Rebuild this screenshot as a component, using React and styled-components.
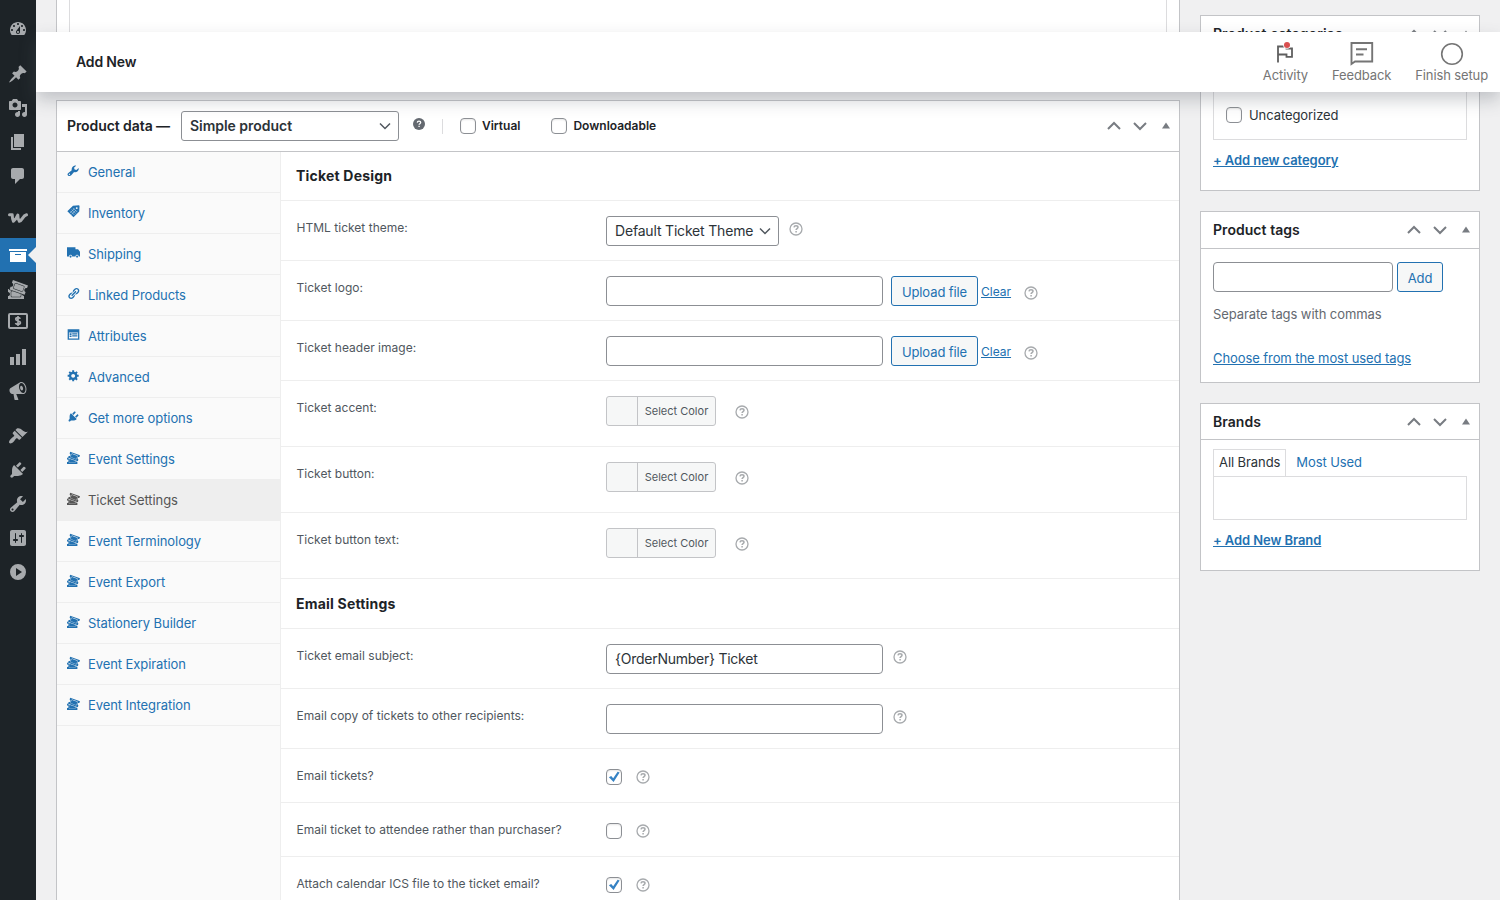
import React from "react";
import styled, { createGlobalStyle, css } from "styled-components";

const GlobalStyle = createGlobalStyle`
  * {
    box-sizing: border-box;
  }
  body {
    margin: 0;
    overflow: hidden;
    background: #f0f0f1;
    color: #3c434a;
    font-family: Inter, "Liberation Sans", sans-serif;
    font-size: 13px;
    letter-spacing: -0.08px;
    line-height: 18px;
  }
  input, button {
    font-family: inherit;
  }
`;

const paths = {
  dashboard:
    "M3.76 16h12.48c1.1-1.37 1.76-3.11 1.76-5 0-4.42-3.58-8-8-8s-8 3.58-8 8c0 1.89.66 3.63 1.76 5zM10 4c.55 0 1 .45 1 1s-.45 1-1 1-1-.45-1-1 .45-1 1-1zM6 6c.55 0 1 .45 1 1s-.45 1-1 1-1-.45-1-1 .45-1 1-1zm8 0c.55 0 1 .45 1 1s-.45 1-1 1-1-.45-1-1 .45-1 1-1zm-5.37 5.55L12 7v6c0 1.1-.9 2-2 2s-2-.9-2-2c0-.57.24-1.08.63-1.45zM4 10c.55 0 1 .45 1 1s-.45 1-1 1-1-.45-1-1 .45-1 1-1zm12 0c.55 0 1 .45 1 1s-.45 1-1 1-1-.45-1-1 .45-1 1-1zm-5 3c0-.55-.45-1-1-1s-1 .45-1 1 .45 1 1 1 1-.45 1-1z",
  pin:
    "M10.44 3.02l1.82-1.82 6.36 6.35-1.83 1.82c-1.05-.68-2.48-.57-3.41.36l-.75.75c-.92.93-1.04 2.35-.35 3.41l-1.83 1.82-2.41-2.41-2.8 2.79c-.42.42-3.38 2.71-3.8 2.29s1.86-3.39 2.28-3.81l2.79-2.79L4.1 9.36l1.83-1.82c1.05.69 2.48.57 3.4-.36l.75-.75c.93-.92 1.05-2.35.36-3.41z",
  media:
    "M13 11V4c0-.55-.45-1-1-1h-1.67L9 1H5L3.67 3H2c-.55 0-1 .45-1 1v7c0 .55.45 1 1 1h10c.55 0 1-.45 1-1zM7 4.5c1.38 0 2.5 1.12 2.5 2.5S8.38 9.5 7 9.5 4.5 8.38 4.5 7 5.62 4.5 7 4.5zM14 6h5v10.5c0 1.38-1.12 2.5-2.5 2.5S14 17.88 14 16.5s1.12-2.5 2.5-2.5c.17 0 .34.02.5.05V9h-3V6zm-4 8.05V13h2v3.5c0 1.38-1.12 2.5-2.5 2.5S7 17.88 7 16.5 8.12 14 9.5 14c.17 0 .34.02.5.05z",
  page: "M6 15V2h10v13H6zm-1 1h8v2H3V5h2v11z",
  comment:
    "M5 2h9c1.1 0 2 .9 2 2v7c0 1.1-.9 2-2 2h-2l-5 5v-5H5c-1.1 0-2-.9-2-2V4c0-1.1.9-2 2-2z",
  archive: "M19 4v2H1V4h18zM2 7h16v10H2V7zm11 3V9H7v1h6z",
  tickets:
    "M20 6.38L18.99 9.2v-.01c-.52-.19-1.03-.16-1.53.08s-.85.62-1.04 1.14-.16 1.03.07 1.53c.24.5.62.84 1.15 1.03v.01l-1.01 2.82-15.06-5.38.99-2.79c.52.19 1.03.16 1.53-.08.5-.23.84-.61 1.03-1.13s.16-1.03-.08-1.53c-.23-.49-.61-.83-1.13-1.02L4.93 1zm-4.97 5.69l1.37-3.76c.12-.31.1-.65-.04-.95s-.39-.53-.7-.65L8.14 3.98c-.64-.23-1.37.12-1.6.74L5.17 8.48c-.24.65.1 1.37.74 1.6l7.52 2.74c.14.05.28.08.43.08.52 0 1-.33 1.17-.83zM7.97 4.45l7.51 2.73c.19.07.34.21.43.39.08.18.09.38.02.57l-1.37 3.76c-.13.38-.58.59-.96.45L6.09 9.61c-.39-.14-.59-.57-.45-.96l1.37-3.76c.1-.29.39-.49.7-.49.09 0 .17.02.26.05zm6.82 12.14c.35.27.75.41 1.2.41H16v3H0v-2.96c.55 0 1.03-.2 1.41-.59.39-.38.59-.86.59-1.41s-.2-1.02-.59-1.41-.86-.59-1.41-.59V10h1.05l-.28.8 2.87 1.02c-.51.16-.89.62-.89 1.18v4c0 .69.56 1.25 1.25 1.25h8c.69 0 1.25-.56 1.25-1.25v-1.75l.83.3c.12.43.36.78.71 1.04zM3.25 17v-4c0-.41.34-.75.75-.75h.83l7.92 2.83V17c0 .41-.34.75-.75.75H4c-.41 0-.75-.34-.75-.75z",
  chart: "M18 18V2h-4v16h4zm-6 0V7H8v11h4zm-6 0v-8H2v8h4z",
  megaphone:
    "M18.15 5.94c.46 1.62.38 3.22-.02 4.48-.42 1.28-1.26 2.18-2.3 2.48-.16.06-.26.06-.4.06-.06.02-.12.02-.18.02-.06.02-.14.02-.22.02h-6.8l2.22 5.5c.02.14-.06.26-.14.34-.08.1-.24.16-.34.16H6.95c-.1 0-.26-.06-.34-.16-.08-.08-.16-.2-.14-.34l-1-5.5H4.25l-.02-.02c-.5.06-1.08-.18-1.54-.62s-.88-1.08-1.06-1.88c-.24-.8-.2-1.56-.02-2.2.18-.62.58-1.08 1.06-1.3l.02-.02 9-5.4c.1-.06.18-.1.24-.16.06-.04.14-.08.24-.12.16-.08.28-.12.5-.18 1.04-.3 2.24.1 3.22.98s1.84 2.24 2.26 3.86zm-2.58 5.98h-.02c.4-.1.74-.34 1.04-.7.58-.7.86-1.76.86-3.04 0-.64-.1-1.3-.28-1.98-.34-1.36-1.02-2.5-1.78-3.24s-1.68-1.1-2.46-.88c-.82.22-1.4.96-1.7 2-.32 1.04-.28 2.36.06 3.72.38 1.36 1 2.5 1.8 3.24.78.74 1.62 1.1 2.48.88zm-2.54-7.08c.22-.04.42-.02.62.04.38.16.76.48 1.02 1s.42 1.2.42 1.78c0 .3-.04.56-.12.8-.18.48-.44.84-.86.94-.34.1-.8-.06-1.14-.4s-.64-.86-.78-1.5c-.18-.62-.12-1.24.02-1.72s.48-.84.82-.94z",
  brush:
    "M14.48 11.06L7.41 3.99l1.5-1.5c.5-.56 2.3-.47 3.51.32 1.21.8 1.43 1.28 2.91 2.1 1.18.64 2.45 1.26 4.45.85zm-.71.71L6.7 4.7 4.93 6.47c-.39.39-.39 1.02 0 1.41l1.06 1.06c.39.39.39 1.03 0 1.42-.6.6-1.43 1.11-2.21 1.69-.35.26-.7.53-1.01.84C1.43 14.23.4 16.08 1.4 17.07c.99 1 2.84-.03 4.18-1.36.31-.31.58-.66.85-1.02.57-.78 1.08-1.61 1.69-2.21.39-.39 1.02-.39 1.41 0l1.06 1.06c.39.39 1.02.39 1.41 0z",
  plug:
    "M13.11 4.36L9.87 7.6 8 5.73l3.24-3.24c.35-.34 1.05-.2 1.56.32.52.51.66 1.21.31 1.55zm-8 1.77l.91-1.12 9.01 9.01-1.19.84c-.71.71-2.63 1.16-3.82 1.16H6.14L4.9 17.26c-.59.59-1.54.59-2.12 0-.59-.58-.59-1.53 0-2.12l1.24-1.24v-3.88c0-1.13.4-3.19 1.09-3.89zm7.26 3.97l3.24-3.24c.34-.35 1.04-.21 1.55.31.52.51.66 1.21.31 1.55l-3.24 3.25z",
  tools:
    "M16.68 9.77c-1.34 1.34-3.3 1.67-4.95.99l-5.41 6.52c-.99.99-2.59.99-3.58 0s-.99-2.59 0-3.57l6.52-5.42c-.68-1.65-.35-3.61.99-4.95 1.28-1.28 3.12-1.62 4.72-1.06l-2.89 2.89 2.82 2.82 2.86-2.87c.53 1.58.18 3.39-1.08 4.65zM3.81 16.21c.4.39 1.04.39 1.43 0 .4-.4.4-1.04 0-1.43-.39-.4-1.03-.4-1.43 0-.39.39-.39 1.03 0 1.43z",
  settings:
    "M18 16V4c0-1.1-.9-2-2-2H4c-1.1 0-2 .9-2 2v12c0 1.1.9 2 2 2h12c1.1 0 2-.9 2-2zM8 11h1c.55 0 1 .45 1 1s-.45 1-1 1H8v1.5c0 .28-.22.5-.5.5s-.5-.22-.5-.5V13H6c-.55 0-1-.45-1-1s.45-1 1-1h1V5.5c0-.28.22-.5.5-.5s.5.22.5.5V11zm5-2h-1c-.55 0-1-.45-1-1s.45-1 1-1h1V5.5c0-.28.22-.5.5-.5s.5.22.5.5V7h1c.55 0 1 .45 1 1s-.45 1-1 1h-1v5.5c0 .28-.22.5-.5.5s-.5-.22-.5-.5V9z",
  collapse:
    "M10 2a8 8 0 1 0 0 16 8 8 0 0 0 0-16zM8 6l6 4-6 4z",
  wrench:
    "M1.5 17.6c-1.3-1.3-.7-2.9.6-3.9l5.2-3.9C6.8 7.500 7.600 5.200 9.200 3.900c1.400-1.200 3.100-1.700 4.800-1.400l-3.200 3.400.9 2.700 2.800.7 3.400-3.300c.5 1.800-.2 3.700-1.500 5-1.500 1.500-3.600 2-5.500 1.300l-4.400 5.100c-1.400 1.500-3.600 1.600-5 .2zM3 16.700l1.300.2.6-1.200-.9-1-1.300.5z",
  truck:
    "M0 2h13v3h4l3 4v7h-2a2.500 2.500 0 0 0-5 0H8a2.500 2.500 0 0 0-5 0H0zM5.500 14.700a1.600 1.600 0 1 1 0 3.200 1.600 1.600 0 0 1 0-3.200zM15.500 14.700a1.600 1.600 0 1 1 0 3.200 1.600 1.600 0 0 1 0-3.200z",
  link:
    "M17.74 2.76c1.68 1.69 1.68 4.41 0 6.1l-1.53 1.52c-1.12 1.12-2.7 1.47-4.14 1.09l2.62-2.61.76-.77.76-.76c.84-.84.84-2.2 0-3.04-.84-.85-2.2-.85-3.04 0l-.77.76-3.38 3.38c-.37-1.44-.02-3.02 1.1-4.14l1.52-1.53c1.69-1.68 4.42-1.68 6.1 0zM8.59 13.43l5.34-5.34c.42-.42.42-1.1 0-1.52-.44-.43-1.13-.39-1.53 0l-5.33 5.34c-.42.42-.42 1.1 0 1.52.44.43 1.13.39 1.52 0zm-.76 2.29l4.14-4.15c.38 1.44.03 3.02-1.09 4.14l-1.52 1.53c-1.69 1.68-4.41 1.68-6.1 0-1.68-1.68-1.68-4.42 0-6.1l1.53-1.52c1.12-1.12 2.7-1.47 4.14-1.1l-4.14 4.15c-.85.84-.85 2.2 0 3.05.84.84 2.2.84 3.04 0z",
  feedback: "M1 2h18v16H1zM3 7v9h14V7zM4 8h3v3H4zM8 8h8v2H8zM8 11h8v2H8zM4 12h3v2H4z",
  gear:
    "M18 12h-2.18c-.17.7-.44 1.35-.81 1.93l1.54 1.54-2.1 2.1-1.54-1.54c-.58.36-1.23.63-1.91.79V19H8v-2.18c-.68-.16-1.33-.43-1.91-.79l-1.54 1.54-2.12-2.12 1.54-1.54c-.36-.58-.63-1.23-.79-1.91H1V9.03h2.17c.16-.7.44-1.35.8-1.94L2.43 5.55l2.1-2.1 1.54 1.54c.58-.37 1.24-.64 1.93-.81V2h3v2.18c.68.16 1.33.43 1.91.79l1.54-1.54 2.12 2.12-1.54 1.54c.36.59.64 1.24.8 1.94H18V12zm-8.5 1.5c1.66 0 3-1.34 3-3s-1.34-3-3-3-3 1.34-3 3 1.34 3 3 3z",
};

const Svg = styled.svg`
  display: block;
  flex: none;
  fill: currentColor;
  fill-rule: evenodd;
`;

const Icon = ({ name, size = 20 }) => {
  if (name === "woo") {
    return (
      <Svg width={size} height={size} viewBox="0 0 20 20">
        <path
          d="M1.500 3.700h2.700c.1 2.500.3 5 1.200 6.600C7.400 9 8.700 6.500 9.800 4c0 2.500.3 4.800 1.500 6.300 3.200-.6 3.200-5.600 7.200-6.500"
          fill="none"
          stroke="currentColor"
          strokeWidth="3"
          strokeLinecap="round"
          strokeLinejoin="round"
        />
      </Svg>
    );
  }
  if (name === "payments") {
    return (
      <Svg width={size} height={size} viewBox="0 0 20 20">
        <rect x="1" y="1" width="18" height="14" rx="1" fill="none" stroke="currentColor" strokeWidth="2" />
        <path
          d="M12.300 5.800C12 5 11.200 4.700 10 4.700c-1.300 0-2.200.5-2.200 1.500 0 2.400 4.600 1.100 4.600 3.500 0 1.100-1 1.600-2.400 1.600-1.300 0-2.200-.5-2.500-1.400M10 3v10"
          fill="none"
          stroke="currentColor"
          strokeWidth="1.700"
        />
      </Svg>
    );
  }
  if (name === "tag") {
    return (
      <Svg width={size} height={size} viewBox="0 0 20 20">
        <path d="M.500 9.700L9.200 1l9.300-.500.800 1.200L18.800 10 10 18.800zM15 3.300a1.500 1.500 0 1 0 0 3 1.500 1.500 0 0 0 0-3z" />
        <path
          d="M5 9l6.500 6.500M7.200 6.800l6.500 6.500M9.400 4.600l6.500 6.500M4.800 12.200l6.600-6.600M7.200 14.500l6.600-6.600"
          stroke="#fff"
          strokeWidth=".9"
          opacity=".7"
        />
      </Svg>
    );
  }
  return (
    <Svg width={size} height={size} viewBox="0 0 20 20">
      <path d={paths[name]} />
    </Svg>
  );
};

const HelpIcon = ({ solid }) => (
  <Svg width={solid ? 12 : 14} height={solid ? 12 : 14} viewBox="0 0 14 14">
    <circle
      cx="7"
      cy="7"
      r={solid ? 7 : 6}
      fill={solid ? "currentColor" : "none"}
      stroke={solid ? "none" : "currentColor"}
      strokeWidth="1.300"
    />
    <path
      d="M5 5.400c.1-1.100.9-1.700 2-1.700s2 .6 2 1.600c0 1.300-1.900 1.400-1.900 2.700M7.100 9v1.500"
      fill="none"
      stroke={solid ? "#fff" : "currentColor"}
      strokeWidth="1.500"
    />
  </Svg>
);

const Layout = styled.div`
  display: flex;
  height: 900px;
  overflow: hidden;
`;

const AdminMenu = styled.nav`
  flex: none;
  width: 36px;
  padding-top: 12px;
  background: #1d2327;
  color: #a7aaad;
`;

const MenuItem = styled.a`
  display: flex;
  position: relative;
  align-items: center;
  justify-content: center;
  height: 34px;
  margin-top: ${(props) => (props.$gap ? "11px" : 0)};
  padding-right: 1px;
  ${(props) =>
    props.$active &&
    css`
      background: #2271b1;
      color: #fff;
      &::after {
        content: "";
        position: absolute;
        right: 0;
        top: 9px;
        border: 8px solid transparent;
        border-right-color: #f0f0f1;
        border-left: 0;
      }
    `}
`;

const Content = styled.div`
  position: relative;
  flex: 1;
  display: flex;
  align-items: flex-start;
  gap: 20px;
  padding: 0 20px;
`;

const TopBar = styled.header`
  position: absolute;
  left: 0;
  right: 0;
  top: 32px;
  z-index: 2;
  display: flex;
  align-items: center;
  justify-content: space-between;
  height: 60px;
  padding: 0 12px 0 40px;
  background: #fff;
  box-shadow: 0 8px 16px 0 rgba(85, 93, 102, 0.3);
`;

const PageTitle = styled.h1`
  margin: 0;
  color: #1d2327;
  font-size: 14px;
  font-weight: 600;
  letter-spacing: -0.15px;
  line-height: 20px;
`;

const Activity = styled.div`
  display: flex;
  gap: 24px;
`;

const ActivityTab = styled.div`
  display: flex;
  flex-direction: column;
  align-items: center;
  padding-top: 2px;
  color: #757575;
  letter-spacing: -0.12px;
  white-space: nowrap;
`;

const MainColumn = styled.main`
  width: 1124px;
`;

const EditorBox = styled.div`
  height: 80px;
  margin-bottom: 20px;
  padding: 0 12px;
  border: 1px solid #c3c4c7;
  border-top: 0;
  background: #fff;
`;

const EditorFrame = styled.div`
  height: 60px;
  border: 1px solid #dcdcde;
  border-top: 0;
`;

const Box = styled.section`
  border: 1px solid #c3c4c7;
  background: #fff;
`;

const BoxHeader = styled.div`
  display: flex;
  align-items: center;
  justify-content: space-between;
  height: ${(props) => props.$height || 36}px;
  padding: 0 6px 0 ${(props) => props.$left || 12}px;
  border-bottom: 1px solid #c3c4c7;
`;

const BoxTitle = styled.h2`
  margin: 0;
  color: #1d2327;
  font-size: 14px;
  font-weight: 600;
  letter-spacing: ${(props) => props.$spacing || 0}px;
  line-height: 20px;
`;

const HandleGroup = styled.div`
  display: flex;
  align-items: center;
  gap: 12px;
  color: #787c82;
`;

const Handles = () => (
  <HandleGroup>
    <Svg width="14" height="10" viewBox="0 0 14 10">
      <path d="M1 8l6-6 6 6" fill="none" stroke="currentColor" strokeWidth="2" />
    </Svg>
    <Svg width="14" height="10" viewBox="0 0 14 10">
      <path d="M1 2l6 6 6-6" fill="none" stroke="currentColor" strokeWidth="2" />
    </Svg>
    <Svg width="14" height="10" viewBox="0 0 14 10">
      <path d="M3 7.500L7 1.500l4 6z" />
    </Svg>
  </HandleGroup>
);

const DataTitle = styled.div`
  display: flex;
  align-items: center;
  padding-left: 11px;
  flex: 1;
`;

const SelectBox = styled.div`
  display: flex;
  align-items: center;
  justify-content: space-between;
  width: ${(props) => props.$width}px;
  height: 30px;
  padding: 0 7px 0 8px;
  border: 1px solid #8c8f94;
  border-radius: 3px;
  background: #fff;
  color: #2c3338;
  font-size: 14px;
  font-weight: ${(props) => (props.$bold ? 600 : 400)};
  letter-spacing: ${(props) => (props.$bold ? -0.03 : -0.18)}px;
  white-space: nowrap;
`;

const Select = ({ children, ...rest }) => (
  <SelectBox {...rest}>
    {children}
    <Svg width="12" height="8" viewBox="0 0 12 8">
      <path d="M1 1.500l5 5 5-5" fill="none" stroke="#50575e" strokeWidth="1.500" />
    </Svg>
  </SelectBox>
);

const Divider = styled.span`
  width: 1px;
  height: 15px;
  margin: 0 17px 0 17px;
  background: #dcdcde;
`;

const Check = styled.span`
  display: flex;
  align-items: center;
  justify-content: center;
  flex: none;
  width: 16px;
  height: 16px;
  border: 1px solid #8c8f94;
  border-radius: 4px;
  background: #fff;
  box-shadow: inset 0 1px 2px rgba(0, 0, 0, 0.1);
`;

const Checkbox = ({ checked }) => (
  <Check>
    {checked && (
      <Svg width="12" height="12" viewBox="0 0 12 12">
        <path d="M.900 6.300l2.300-1.400 2 2.400L9.600.800l2 .8-6 9.400z" fill="#3582c4" />
      </Svg>
    )}
  </Check>
);

const TypeOption = styled.label`
  display: flex;
  align-items: center;
  gap: 6px;
  margin-right: 31px;
  color: #1d2327;
  font-size: 12px;
  font-weight: 600;
  letter-spacing: 0;
`;

const HeaderHelp = styled.span`
  margin: -4px 0 0 14px;
  color: #646970;
`;

const DataBody = styled.div`
  display: flex;
  height: 780px;
`;

const Tabs = styled.ul`
  flex: none;
  width: 224px;
  margin: 0;
  padding: 0;
  border-right: 1px solid #eee;
  background: #fafafa;
  list-style: none;
`;

const Tab = styled.li`
  display: flex;
  align-items: center;
  gap: 8px;
  height: 41px;
  padding-left: 10px;
  border-bottom: 1px solid #eee;
  background: ${(props) => (props.$active ? "#eee" : "none")};
  color: ${(props) => (props.$active ? "#555" : "#2271b1")};
  svg {
    margin-top: -4px;
  }
`;

const Options = styled.div`
  flex: 1;
`;

const SectionTitle = styled.h3`
  display: flex;
  align-items: center;
  height: ${(props) => props.$height}px;
  margin: 0;
  padding-left: 15px;
  border-bottom: 1px solid #eee;
  color: #1d2327;
  font-size: 14px;
  font-weight: 700;
  letter-spacing: 0.2px;
`;

const Field = styled.div`
  display: flex;
  height: ${(props) => props.$height}px;
  padding: 15px 0 0 15px;
  border-bottom: 1px solid #eee;
`;

const Label = styled.label`
  flex: none;
  width: 310px;
  padding: 2px 0 0 0.5px;
  color: #50575e;
  font-size: 12px;
  letter-spacing: 0.02px;
  line-height: 20px;
`;

const Control = styled.div`
  display: flex;
  align-items: center;
  height: ${(props) => (props.$short ? 26 : 30)}px;
`;

const TextInput = styled.input`
  width: ${(props) => props.$width || 277}px;
  height: 30px;
  padding: 0 8px 2px;
  border: 1px solid #8c8f94;
  border-radius: 4px;
  outline: 0;
  background: #fff;
  color: #2c3338;
  font-size: 14px;
  letter-spacing: -0.25px;
`;

const Button = styled.button`
  width: ${(props) => props.$width}px;
  height: 30px;
  margin-left: ${(props) => props.$gap}px;
  padding: 1px 0 0;
  border: 1px solid #2271b1;
  border-radius: 3px;
  background: #f6f7f7;
  color: #2271b1;
  font-size: 13px;
  letter-spacing: -0.1px;
  white-space: nowrap;
`;

const Link = styled.a`
  color: #2271b1;
  font-size: ${(props) => props.$size || 13}px;
  font-weight: ${(props) => (props.$bold ? 600 : 400)};
  text-decoration: underline;
  white-space: nowrap;
`;

const ClearLink = styled(Link)`
  width: 43px;
  margin-left: 3px;
  padding-top: 2px;
  letter-spacing: 0;
`;

const ColorButton = styled.div`
  display: flex;
  width: 110px;
  height: 30px;
  border: 1px solid #c3c4c7;
  border-radius: 3px;
  background: #f6f7f7;
  color: #50575e;
  font-size: 11px;
  letter-spacing: 0;
  line-height: 28px;
  span {
    flex: 1;
    margin-left: 30px;
    border-left: 1px solid #c3c4c7;
    text-align: center;
    white-space: nowrap;
  }
`;

const Tip = styled.span`
  margin: ${(props) => props.$top || 0}px 0 0 ${(props) => props.$left}px;
  color: #a7aaad;
`;

const SideColumn = styled.aside`
  display: flex;
  flex-direction: column;
  gap: 20px;
  width: 280px;
  padding-top: 15px;
`;

const SideBody = styled.div`
  display: flex;
  flex-direction: column;
  align-items: flex-start;
  height: ${(props) => props.$height}px;
  padding: ${(props) => props.$top}px 12px 0;
`;

const ListBox = styled.div`
  width: 254px;
  height: ${(props) => props.$height}px;
  border: 1px solid #dcdcde;
`;

const CategoryItem = styled.label`
  display: flex;
  align-items: center;
  gap: 7px;
  padding: 37px 0 0 12px;
  color: #2c3338;
`;

const TagForm = styled.div`
  display: flex;
`;

const Hint = styled.p`
  margin: 13px 0 26px;
  color: #646970;
`;

const BrandTabs = styled.div`
  display: flex;
  height: 28px;
  margin-bottom: -1px;
`;

const BrandTab = styled.span`
  padding: 3px 5px 0;
  border: 1px solid ${(props) => (props.$active ? "#dcdcde" : "transparent")};
  border-bottom: 0;
  background: ${(props) => (props.$active ? "#fff" : "none")};
  color: ${(props) => (props.$active ? "#2c3338" : "#2271b1")};
  margin-right: 4px;
`;

const AddLink = styled(Link)`
  margin-top: ${(props) => props.$top}px;
`;

const menu = [
  { icon: "dashboard" },
  { icon: "pin", gap: true },
  { icon: "media" },
  { icon: "page" },
  { icon: "comment" },
  { icon: "woo", gap: true },
  { icon: "archive", active: true },
  { icon: "tickets" },
  { icon: "payments" },
  { icon: "chart" },
  { icon: "megaphone" },
  { icon: "brush", gap: true },
  { icon: "plug" },
  { icon: "tools" },
  { icon: "settings" },
  { icon: "collapse" },
];

const tabs = [
  ["wrench", "General"],
  ["tag", "Inventory"],
  ["truck", "Shipping"],
  ["link", "Linked Products"],
  ["feedback", "Attributes"],
  ["gear", "Advanced"],
  ["plug", "Get more options"],
  ["tickets", "Event Settings"],
  ["tickets", "Ticket Settings"],
  ["tickets", "Event Terminology"],
  ["tickets", "Event Export"],
  ["tickets", "Stationery Builder"],
  ["tickets", "Event Expiration"],
  ["tickets", "Event Integration"],
];

const UploadField = ({ label }) => (
  <Field $height={60}>
    <Label>{label}</Label>
    <Control>
      <TextInput />
      <Button $width={87} $gap={8}>
        Upload file
      </Button>
      <ClearLink $size={12}>Clear</ClearLink>
      <Tip $left={0} $top={4}>
        <HelpIcon />
      </Tip>
    </Control>
  </Field>
);

const ColorField = ({ label }) => (
  <Field $height={66}>
    <Label>{label}</Label>
    <Control>
      <ColorButton>
        <span>Select Color</span>
      </ColorButton>
      <Tip $left={19} $top={2}>
        <HelpIcon />
      </Tip>
    </Control>
  </Field>
);

const TextField = ({ label, value }) => (
  <Field $height={60}>
    <Label>{label}</Label>
    <Control>
      <TextInput defaultValue={value} />
      <Tip $left={10} $top={-4}>
        <HelpIcon />
      </Tip>
    </Control>
  </Field>
);

const CheckField = ({ label, checked }) => (
  <Field $height={54}>
    <Label>{label}</Label>
    <Control $short>
      <Checkbox checked={checked} />
      <Tip $left={14}>
        <HelpIcon />
      </Tip>
    </Control>
  </Field>
);

const SideBox = ({ title, headerHeight, height, top, children }) => (
  <Box>
    <BoxHeader $height={headerHeight}>
      <BoxTitle $spacing={0.05}>{title}</BoxTitle>
      <Handles />
    </BoxHeader>
    <SideBody $height={height} $top={top}>
      {children}
    </SideBody>
  </Box>
);

export default function App() {
  return (
    <Layout>
      <GlobalStyle />
      <AdminMenu>
        {menu.map((item) => (
          <MenuItem key={item.icon} $gap={item.gap} $active={item.active}>
            <Icon name={item.icon} />
          </MenuItem>
        ))}
      </AdminMenu>
      <Content>
        <TopBar>
          <PageTitle>Add New</PageTitle>
          <Activity>
            <ActivityTab>
              <Svg width="24" height="24" viewBox="0 0 24 24">
                <path
                  d="M5 20.500V4.500h8.500v2H19v8.300h-5.500v-2.300H5"
                  fill="none"
                  stroke="#5f5f5f"
                  strokeWidth="1.800"
                />
                <circle cx="14" cy="3" r="3.800" fill="#fff" />
                <circle cx="14" cy="3" r="3" fill="#d94f4f" />
              </Svg>
              Activity
            </ActivityTab>
            <ActivityTab>
              <Svg width="24" height="24" viewBox="0 0 24 24">
                <path
                  d="M1.500 1h20.700v18.500H5L1.500 22zM6 7.300h11M6 12.500h7.500"
                  fill="none"
                  stroke="currentColor"
                  strokeWidth="1.900"
                />
              </Svg>
              Feedback
            </ActivityTab>
            <ActivityTab>
              <Svg width="24" height="24" viewBox="0 0 24 24">
                <circle cx="12" cy="12" r="10.300" fill="none" stroke="currentColor" strokeWidth="1.600" />
              </Svg>
              Finish setup
            </ActivityTab>
          </Activity>
        </TopBar>

        <MainColumn>
          <EditorBox>
            <EditorFrame />
          </EditorBox>
          <Box>
            <BoxHeader $height={51} $left={10}>
              <BoxTitle $spacing={-0.08}>Product data —</BoxTitle>
              <DataTitle>
                <Select $width={218} $bold>
                  Simple product
                </Select>
                <HeaderHelp>
                  <HelpIcon solid />
                </HeaderHelp>
                <Divider />
                <TypeOption>
                  <Checkbox />
                  Virtual
                </TypeOption>
                <TypeOption>
                  <Checkbox />
                  Downloadable
                </TypeOption>
              </DataTitle>
              <Handles />
            </BoxHeader>
            <DataBody>
              <Tabs>
                {tabs.map(([icon, label]) => (
                  <Tab key={label} $active={label === "Ticket Settings"}>
                    <Icon name={icon} size={13} />
                    {label}
                  </Tab>
                ))}
              </Tabs>
              <Options>
                <SectionTitle $height={49}>Ticket Design</SectionTitle>
                <Field $height={60}>
                  <Label>HTML ticket theme:</Label>
                  <Control>
                    <Select $width={173}>Default Ticket Theme</Select>
                    <Tip $left={10} $top={-4}>
                      <HelpIcon />
                    </Tip>
                  </Control>
                </Field>
                <UploadField label="Ticket logo:" />
                <UploadField label="Ticket header image:" />
                <ColorField label="Ticket accent:" />
                <ColorField label="Ticket button:" />
                <ColorField label="Ticket button text:" />
                <SectionTitle $height={50}>Email Settings</SectionTitle>
                <TextField label="Ticket email subject:" value="{OrderNumber} Ticket" />
                <TextField label="Email copy of tickets to other recipients:" />
                <CheckField label="Email tickets?" checked />
                <CheckField label="Email ticket to attendee rather than purchaser?" />
                <CheckField label="Attach calendar ICS file to the ticket email?" checked />
              </Options>
            </DataBody>
          </Box>
        </MainColumn>

        <SideColumn>
          <SideBox title="Product categories" headerHeight={36} height={138} top={16}>
            <ListBox $height={72}>
              <CategoryItem>
                <Checkbox />
                Uncategorized
              </CategoryItem>
            </ListBox>
            <AddLink $bold $top={11}>
              + Add new category
            </AddLink>
          </SideBox>
          <SideBox title="Product tags" headerHeight={37} height={133} top={13}>
            <TagForm>
              <TextInput $width={180} />
              <Button $width={46} $gap={4}>
                Add
              </Button>
            </TagForm>
            <Hint>Separate tags with commas</Hint>
            <Link>Choose from the most used tags</Link>
          </SideBox>
          <SideBox title="Brands" headerHeight={36} height={130} top={9}>
            <BrandTabs>
              <BrandTab $active>All Brands</BrandTab>
              <BrandTab>Most Used</BrandTab>
            </BrandTabs>
            <ListBox $height={44} />
            <AddLink $bold $top={11}>
              + Add New Brand
            </AddLink>
          </SideBox>
        </SideColumn>
      </Content>
    </Layout>
  );
}
